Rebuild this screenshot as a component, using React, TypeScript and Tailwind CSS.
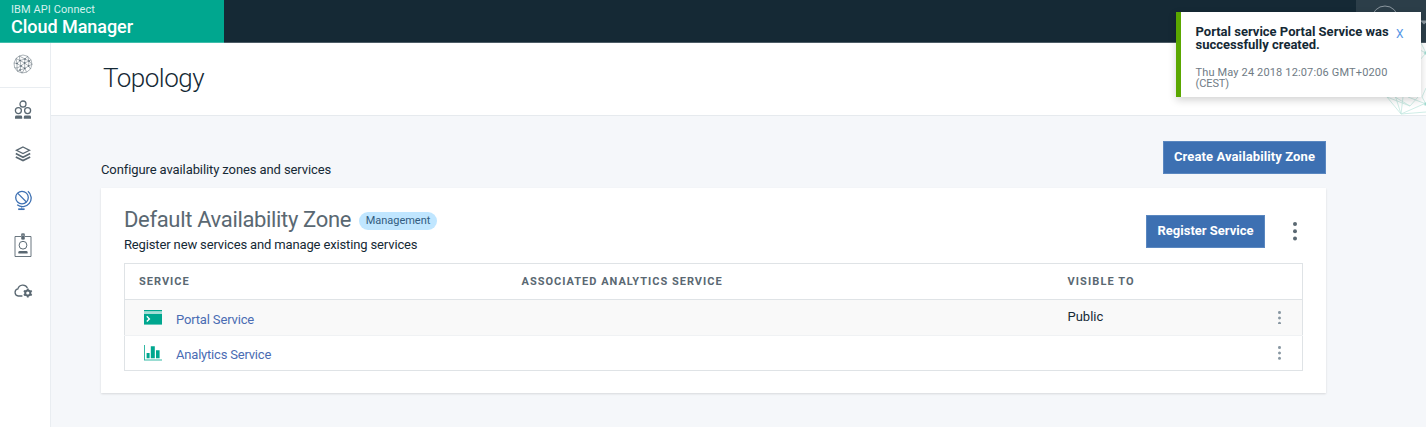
import type { ReactNode } from "react";

function Kebab({ className, r, gap }: { className: string; r: number; gap: number }) {
  const h = gap * 2 + r * 2;
  return (
    <svg className={className} width={r * 2} height={h} viewBox={`0 0 ${r * 2} ${h}`} fill="currentColor">
      {[0, 1, 2].map((i) => (
        <circle key={i} cx={r} cy={r + i * gap} r={r} />
      ))}
    </svg>
  );
}

function MeshIcon() {
  return (
    <svg width="20" height="20" viewBox="0 0 20 20" fill="none" stroke="#5a6872" strokeWidth="0.5">
      <path d="M10 1 14.5 2.2 18 5.8 19 10.3 17.5 15 13.6 18.2 9 19 4.5 17.3 1.6 13.6 1 9 3 4.5 6.2 2Z" />
      <path d="M12 5 6.2 2 7 6.5 3 4.5 4 9.5 1 9M12 5 14.5 2.2 16 7 18 5.8M16 7 19 10.3 15.6 12 17.5 15M12 5 7 6.5 4 9.5 8 12 7 6.5 11.6 9 12 5 16 7 11.6 9 8 12 11.8 14.4 11.6 9 15.6 12 16 7M15.6 12 11.8 14.4 13.6 18.2M11.8 14.4 9 19 7 16 8 12 4 14 4 9.5 M1.6 13.6 4 14 4.5 17.3 7 16 11.8 14.4" />
      <g fill="#5a6872" stroke="none">
        <circle cx="12" cy="5" r=".8" /><circle cx="7" cy="6.5" r=".8" /><circle cx="16" cy="7" r=".8" />
        <circle cx="4" cy="9.5" r=".8" /><circle cx="8" cy="12" r=".8" /><circle cx="11.6" cy="9" r=".8" />
        <circle cx="15.6" cy="12" r=".8" /><circle cx="11.8" cy="14.4" r=".8" /><circle cx="7" cy="16" r=".8" />
      </g>
    </svg>
  );
}

function PeopleIcon() {
  return (
    <svg width="18" height="20" viewBox="0 0 18 20" fill="none" stroke="#5a6872" strokeWidth="1.3">
      <circle cx="9" cy="4" r="3" />
      <circle cx="4.4" cy="10.6" r="3" />
      <circle cx="13.6" cy="10.6" r="3" />
      <path d="M1 18.7v-1.7q0-1.4 1.4-1.4h4.4q1.4 0 1.4 1.4v1.7zM9.8 18.7v-1.7q0-1.4 1.4-1.4h4.4q1.4 0 1.4 1.4v1.7z" fill="#5a6872" stroke="none" />
    </svg>
  );
}

function LayersIcon() {
  return (
    <svg width="16" height="16" viewBox="0 0 16 16" fill="none" stroke="#5a6872" strokeWidth="1.3">
      <path d="M8 1 14.6 4.3 8 7.6 1.4 4.3Z" />
      <path d="M.8 7.6 8 11.2 15.2 7.6M.8 11 8 14.6 15.2 11" strokeWidth="1.7" />
    </svg>
  );
}

function GlobeIcon() {
  return (
    <svg width="18" height="21" viewBox="0 0 18 21" fill="none" stroke="#3d70b2">
      <circle cx="8" cy="7.6" r="6.3" strokeWidth="1.3" />
      <path d="M3.6 3.2 12.4 12" strokeWidth="1.2" />
      <path d="M13.9 1.3A8.6 8.6 0 0 1 3.2 14.8" strokeWidth="1.3" />
      <path d="M7.6 16v3" strokeWidth=".6" />
      <path d="M4.2 19.2h6.4" strokeWidth="1.7" />
    </svg>
  );
}

function BadgeIcon() {
  return (
    <svg width="18" height="25" viewBox="0 0 18 25" fill="none" stroke="#5a6872">
      <path d="M7 3.5H1v20h16v-20h-6" strokeWidth=".9" />
      <path d="M7.7.8h2.6v5.4H7.7z" fill="#5a6872" strokeWidth=".8" />
      <path d="M8.5 2.2h1" stroke="#fff" />
      <circle cx="9" cy="12.2" r="3.9" strokeWidth="1" />
      <path d="M4.4 20.6v-1.4q0-1.2 1.2-1.2h6.8q1.2 0 1.2 1.2v1.4z" fill="#5a6872" stroke="none" />
    </svg>
  );
}

function CloudGearIcon() {
  return (
    <svg width="19" height="14" viewBox="0 0 19 14" fill="none" stroke="#5a6872">
      <path d="M8.4 12H4.3a3.6 3.6 0 0 1-.4-7.1A5.1 5.1 0 0 1 13.4 4" strokeWidth="1.3" />
      <circle cx="13.8" cy="9" r="2.6" strokeWidth="2" />
      <path d="M13.8 4.4v2M13.8 11.6v2M9.8 6.7l1.8 1M16 10.3l1.8 1M9.8 11.3l1.8-1M16 7.7l1.8-1" strokeWidth="1.8" />
    </svg>
  );
}

function PortalIcon() {
  return (
    <svg width="18" height="15" viewBox="0 0 18 15">
      <path d="M0 0h18v1.5H0z" fill="#00a78f" />
      <path d="M0 1.5h18V4H0z" fill="#a6ded6" />
      <path d="M0 4h18v10.6H0z" fill="#00a78f" />
      <path d="M2.8 6.2 5.4 8.9 2.8 11.6" fill="none" stroke="#fff" strokeWidth="1.4" />
    </svg>
  );
}

function ChartIcon() {
  return (
    <svg width="18" height="16" viewBox="0 0 18 16" fill="#00a78f">
      <path d="M0 0h1v14.6h17v1H0z" opacity=".8" />
      <path d="M2.6 8h3v5.2h-3zM6.8 1.2h4v12h-4zM12 5.2h3.6v8H12z" />
    </svg>
  );
}

function NavItem({ height, children }: { height: string; children: ReactNode }) {
  return <a className={`flex w-[46px] items-center justify-center ${height}`}>{children}</a>;
}

function Toast() {
  return (
    <div className="absolute left-[1176px] top-[12px] z-10 flex h-[85px] w-[245px] border-l-[5px] border-[#5aa700] bg-white shadow-[0_3px_8px_rgba(0,0,0,0.18)]">
      <div className="w-[200px] pl-[14.5px] pt-[14px]">
        <p className="whitespace-nowrap text-[13px] font-bold leading-[12.5px] text-[#152935]">
          Portal service Portal Service was
          <br />
          successfully created.
        </p>
        <p className="mt-[16px] whitespace-nowrap text-[11px] leading-[11px] tracking-[0.15px] text-[#6f7b85]">
          Thu May 24 2018 12:07:06 GMT+0200
          <br />
          <span className="tracking-[-0.1px]">(CEST)</span>
        </p>
      </div>
      <span className="ml-[15px] mt-[15px] text-[12px] leading-[14px] text-[#5596e6]">X</span>
    </div>
  );
}

const button = "flex h-[33px] items-center justify-center whitespace-nowrap border border-[#5a87c0] bg-[#3d70b2] pb-[1px] text-[13px] font-bold text-white";

export default function App() {
  return (
    <div className="relative h-[427px] w-[1426px] overflow-hidden bg-[#f5f7fa] font-['Roboto',sans-serif] text-[13px] text-[#152935]">
      <header className="flex h-[43px] border-b border-[#4d5c66] bg-[#152935]">
        <div className="h-[43px] w-[224px] border-b border-[#40bdab] bg-[#00a78f] pl-[11px] text-white">
          <div className="pt-[2px] text-[11px] leading-[15px] tracking-[0.08px] text-[#d4f1ed]">IBM API Connect</div>
          <div className="text-[18px] font-medium leading-[20px] tracking-[-0.04px]">Cloud Manager</div>
        </div>
        <div className="ml-auto h-[42px] w-[70px] bg-[#2c3e49]">
          <svg width="70" height="42" fill="none" stroke="#8b979f">
            <circle cx="29" cy="19" r="13" />
            <path d="M64 20.5h8l-4 4z" fill="#8b979f" stroke="none" />
          </svg>
        </div>
      </header>
      <div className="flex h-[384px]">
        <nav className="w-[51px] shrink-0 border-r border-[#e9edf1] bg-white">
          <div className="border-b border-[#e9edf1]">
            <NavItem height="h-[44px] pb-[3px]"><MeshIcon /></NavItem>
          </div>
          <NavItem height="h-[43px]"><PeopleIcon /></NavItem>
          <NavItem height="h-[47px] pb-[1px]"><LayersIcon /></NavItem>
          <NavItem height="h-[44px]"><GlobeIcon /></NavItem>
          <NavItem height="h-[46px]"><BadgeIcon /></NavItem>
          <NavItem height="h-[46px]"><CloudGearIcon /></NavItem>
        </nav>
        <main className="w-[1375px]">
          <div className="flex h-[73px] justify-between border-b border-[#e6eaee] bg-white pl-[52px]">
            <h1 className="pt-[15px] text-[26px] font-light leading-[40px] tracking-[-0.5px]">Topology</h1>
            <svg width="80" height="72" viewBox="1346 43 80 72" fill="none" stroke="#c4e8e1" strokeWidth=".8">
              <path d="M1387 97 1401 114 1426 103M1387 97 1410 106M1401 114 1395 95M1401 114 1403 97M1395 97 1410 106 1418 97M1420 50 1426 53 1419 61M1426 53 1421 43M1426 88 1422 97 1426 104 1408 97M1401 114 1426 112" />
              <circle cx="1425.5" cy="104" r="1.4" fill="#a0dacf" />
              <circle cx="1425.5" cy="53" r="1.4" fill="#a0dacf" />
            </svg>
          </div>
          <div className="pl-[50px] pr-[100px]">
            <div className="flex h-[71.5px] justify-between pt-[24.5px]">
              <p className="pt-[19.5px] leading-[20px] tracking-[-0.1px]">Configure availability zones and services</p>
              <button className={`${button} w-[163px] tracking-[0.1px]`}>Create Availability Zone</button>
            </div>
            <section className="h-[205.5px] bg-white px-[23px] shadow-[0_1px_2px_rgba(0,0,0,0.12)]">
              <div className="flex h-[75.5px] justify-between">
                <div className="pt-[17px]">
                  <div className="flex h-[30px] items-center">
                    <h2 className="w-[235px] whitespace-nowrap text-[22px] leading-[30px] tracking-[-0.34px] text-[#5a6872]">Default Availability Zone</h2>
                    <span className="mt-[3px] h-[18px] w-[78px] rounded-full bg-[#c0e6ff] text-center text-[11px] leading-[18px] tracking-[-0.03px] text-[#325c80]">Management</span>
                  </div>
                  <p className="leading-[20px] tracking-[-0.14px]">Register new services and manage existing services</p>
                </div>
                <div className="flex pr-[6px] pt-[27.5px]">
                  <button className={`${button} w-[119px]`}>Register Service</button>
                  <Kebab className="ml-[28px] mt-[7px] text-[#5a6872]" r={2} gap={7.3} />
                </div>
              </div>
              <table className="w-[1179px] table-fixed border-collapse border border-[#dfe3e6] text-left">
                <colgroup>
                  <col className="w-[397px]" />
                  <col className="w-[546px]" />
                  <col className="w-[196px]" />
                  <col />
                </colgroup>
                <thead>
                  <tr className="h-[36px] border-b border-[#dfe3e6] text-[11px] leading-[16px] tracking-[1px] text-[#5a6872]">
                    <th className="p-0 pl-[14px]">SERVICE</th>
                    <th className="p-0">ASSOCIATED ANALYTICS SERVICE</th>
                    <th className="p-0 tracking-[1.1px]">VISIBLE TO</th>
                    <th className="p-0" />
                  </tr>
                </thead>
                <tbody>
                  <tr className="h-[36px] border-b border-[#f0f2f4] bg-[#f9f9f9]">
                    <td className="p-0 pl-[19px]">
                      <div className="flex items-center">
                        <PortalIcon />
                        <a className="ml-[14px] pt-[4px] leading-[15px] tracking-[-0.16px] text-[#4a6cb3]">Portal Service</a>
                      </div>
                    </td>
                    <td className="p-0" />
                    <td className="p-0 pb-[2px] leading-[16px]">Public</td>
                    <td className="p-0 pl-[14px]"><Kebab className="text-[#8897a2]" r={1.5} gap={5.4} /></td>
                  </tr>
                  <tr className="h-[35px]">
                    <td className="p-0 pl-[19px]">
                      <div className="flex items-center">
                        <ChartIcon />
                        <a className="ml-[14px] pt-[3px] leading-[16px] tracking-[-0.2px] text-[#4a6cb3]">Analytics Service</a>
                      </div>
                    </td>
                    <td className="p-0" />
                    <td className="p-0" />
                    <td className="p-0 pl-[14px]"><Kebab className="text-[#8897a2]" r={1.5} gap={5.4} /></td>
                  </tr>
                </tbody>
              </table>
            </section>
          </div>
        </main>
      </div>
      <Toast />
    </div>
  );
}
